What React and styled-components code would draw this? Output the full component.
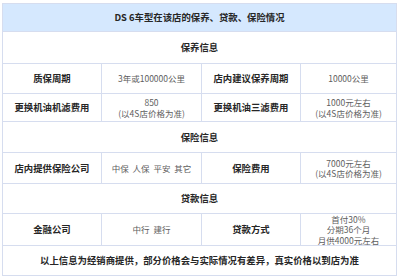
import React from "react";
import styled, { createGlobalStyle } from "styled-components";

const Global = createGlobalStyle`
  html, body { margin: 0; padding: 0; background: #fff; }
  body { font-family: "Noto Sans CJK SC", "Noto Sans", sans-serif; }
`;

const Page = styled.div`
  padding: 3px 0 0 2px;
`;

const Grid = styled.div`
  display: grid;
  grid-template-columns: 98px 99px 98px 95px;
  grid-template-rows: 27px 31px 29px 27px 30px 30px 29px 31px 29px;
  gap: 1px;
  padding: 1px;
  background: #d6ddef;
  width: max-content;
`;

const Cell = styled.div`
  background: ${(p) => (p.$head ? "#d5e8fe" : "#fff")};
  grid-column: span ${(p) => p.$span || 1};
  display: flex;
  flex-direction: column;
  align-items: center;
  justify-content: center;
  text-align: center;
  font-size: ${(p) => (p.$bold ? "9.4px" : "8.5px")};
  line-height: 10.5px;
  font-weight: ${(p) => (p.$bold ? 700 : 400)};
  color: ${(p) => (p.$bold ? "#262626" : "#5e5e5e")};
  white-space: nowrap;
`;

const rows = [
  { type: "section", text: "保养信息" },
  { type: "pair", cells: [["质保周期", ["3年或100000公里"]], ["店内建议保养周期", ["10000公里"]]] },
  { type: "pair", cells: [["更换机油机滤费用", ["850", "(以4S店价格为准)"]], ["更换机油三滤费用", ["1000元左右", "(以4S店价格为准)"]]] },
  { type: "section", text: "保险信息" },
  { type: "pair", cells: [["店内提供保险公司", ["中保  人保  平安  其它"]], ["保险费用", ["7000元左右", "(以4S店价格为准)"]]] },
  { type: "section", text: "贷款信息" },
  { type: "pair", cells: [["金融公司", ["中行  建行"]], ["贷款方式", ["首付30%", "分期36个月", "月供4000元左右"]]] },
];

const Line = styled.span`
  display: block;
  white-space: pre;
`;

export default function App() {
  return (
    <Page>
      <Global />
      <Grid>
        <Cell $head $span={4} $bold>DS 6车型在该店的保养、贷款、保险情况</Cell>
        {rows.map((r, i) =>
          r.type === "section" ? (
            <Cell key={i} $span={4} $bold>{r.text}</Cell>
          ) : (
            r.cells.map(([label, vals], j) => (
              <React.Fragment key={`${i}-${j}`}>
                <Cell $bold>{label}</Cell>
                <Cell>
                  {vals.map((v, k) => (
                    <Line key={k}>{v}</Line>
                  ))}
                </Cell>
              </React.Fragment>
            ))
          )
        )}
        <Cell $span={4} $bold>以上信息为经销商提供，部分价格会与实际情况有差异，真实价格以到店为准</Cell>
      </Grid>
    </Page>
  );
}
